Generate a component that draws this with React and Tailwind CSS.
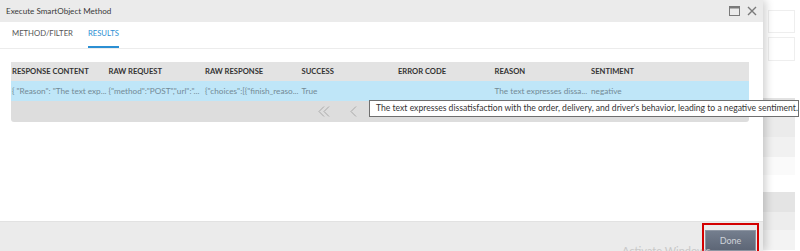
import { useState } from 'react'

const columns = [
  { title: 'Response Content', value: '{ "Reason": "The text exp...' },
  { title: 'Raw Request', value: '{"method":"POST","url":"...' },
  { title: 'Raw Response', value: '{"choices":[{"finish_reaso...' },
  { title: 'Success', value: 'True' },
  { title: 'Error Code', value: '' },
  { title: 'Reason', value: 'The text expresses dissa...' },
  { title: 'Sentiment', value: 'negative' },
]

const tooltip =
  "The text expresses dissatisfaction with the order, delivery, and driver's behavior, leading to a negative sentiment."

const font = { fontFamily: 'Lato, "Open Sans", sans-serif' }

const WindowButtons = () => (
  <div className="flex items-center gap-[7px] pr-[6px]">
    <svg width="11" height="10" viewBox="0 0 11 10" className="text-[#7a7a7a]">
      <rect x="0.5" y="0.5" width="10" height="9" fill="none" stroke="currentColor" />
      <rect x="0.5" y="0.5" width="10" height="2" fill="currentColor" />
    </svg>
    <svg width="10" height="10" viewBox="0 0 10 10" className="text-[#7a7a7a]">
      <path d="M1 1 L9 9 M9 1 L1 9" stroke="currentColor" strokeWidth="1.4" fill="none" />
    </svg>
  </div>
)

const Pager = () => (
  <div className="flex h-[21px] items-center pl-[307px] gap-[20px] text-[#a8a8a8]">
    <svg width="12" height="11" viewBox="0 0 12 11">
      <path d="M6 0.5 L1 5.5 L6 10.5 M11 0.5 L6 5.5 L11 10.5" stroke="currentColor" strokeWidth="1" fill="none" />
    </svg>
    <svg width="7" height="11" viewBox="0 0 7 11">
      <path d="M6 0.5 L1 5.5 L6 10.5" stroke="currentColor" strokeWidth="1" fill="none" />
    </svg>
  </div>
)

const Cursor = () => (
  <svg className="absolute left-[522px] top-[91px]" width="9" height="13" viewBox="0 0 9 13">
    <path d="M0.5 0.5 L0.5 10.5 L3 8.3 L4.8 12.3 L6.3 11.6 L4.6 7.8 L8 7.8 Z" fill="#ffffff" stroke="#555" strokeWidth="0.8" />
  </svg>
)

export default function App() {
  const [tab, setTab] = useState('results')

  return (
    <div className="relative flex h-[251px] w-[800px] overflow-hidden bg-white" style={font}>
      <div className="relative z-10 flex h-full w-[763px] flex-col bg-white shadow-[3px_0_8px_rgba(0,0,0,0.18)]">
        <div className="flex h-[22px] items-center justify-between bg-[#ebebeb] pl-[6px]">
          <span className="text-[8.1px] text-[#3a3a3a]">Execute SmartObject Method</span>
          <WindowButtons />
        </div>

        <div className="flex h-[27px] items-stretch gap-[15px] border-b border-[#ececec] pl-[12px] text-[7.7px]">
          <button
            onClick={() => setTab('method')}
            className={`flex items-center border-b-2 ${tab === 'method' ? 'border-[#2b8fd3] text-[#2b8fd3]' : 'border-transparent text-[#555]'}`}
          >
            METHOD/FILTER
          </button>
          <button
            onClick={() => setTab('results')}
            className={`flex items-center border-b-2 ${tab === 'results' ? 'border-[#2b8fd3] text-[#2b8fd3]' : 'border-transparent text-[#555]'}`}
          >
            RESULTS
          </button>
        </div>

        <div className="flex-1 px-[11px] pt-[13px] pr-[14px]">
          <div className="overflow-hidden rounded-b-[3px] bg-[#dddddd]">
            <div className="flex h-[19px] items-center bg-[#e3e3e3]">
              {columns.map((c) => (
                <div key={c.title} className="w-[96.5px] shrink-0 pl-[1px] text-[7.6px] font-bold uppercase text-[#333]">
                  {c.title}
                </div>
              ))}
            </div>
            <div className="flex h-[20px] items-center bg-[#bfe6f8]">
              {columns.map((c) => (
                <div key={c.title} className="w-[96.5px] shrink-0 overflow-hidden whitespace-nowrap pl-[1px] text-[8.2px] text-[#738a96]">
                  {c.value}
                </div>
              ))}
            </div>
            <Pager />
          </div>
        </div>

        <div className="flex h-[30px] items-start justify-end border-t border-[#e2e2e2] bg-[#ebebeb] pr-[4px] pt-[1px]">
          <div className="border-2 border-[#d30000] p-[1px]">
            <button className="h-[21px] w-[51px] border border-[#8d95a2] bg-gradient-to-b from-[#747e8e] to-[#5d6676] text-[9px] text-[#cfd3da]">
              Done
            </button>
          </div>
        </div>
      </div>

      <div className="flex flex-1 flex-col pt-[10px] pr-[5px]">
        <div className="ml-[5px] h-[23px] border border-[#eeeeee]" />
        <div className="ml-[5px] mt-[4px] h-[24px] border border-[#eeeeee]" />
        <div className="mt-[37px] h-[17px] bg-[#e2e2e2]" />
        <div className="h-[22px] bg-[#ebebeb]" />
        <div className="h-[20px] bg-[#f1f1f1]" />
        <div className="h-[18px] bg-[#fafafa]" />
        <div className="mt-[17px] h-[20px] bg-[#e4e4e4]" />
        <div className="h-[18px] bg-[#ededed]" />
        <div className="h-[20px] bg-[#f3f3f3]" />
      </div>

      <div className="absolute left-[369px] top-[100px] z-20 flex h-[17px] w-[430px] items-center border border-[#6f6f6f] bg-white pl-[6px] text-[8.6px] whitespace-nowrap text-[#333]">
        {tooltip}
      </div>
      <Cursor />
      <div className="absolute left-[622px] top-[243px] z-20 text-[11px] text-[#c8c8c8]">Activate Windows</div>
    </div>
  )
}
